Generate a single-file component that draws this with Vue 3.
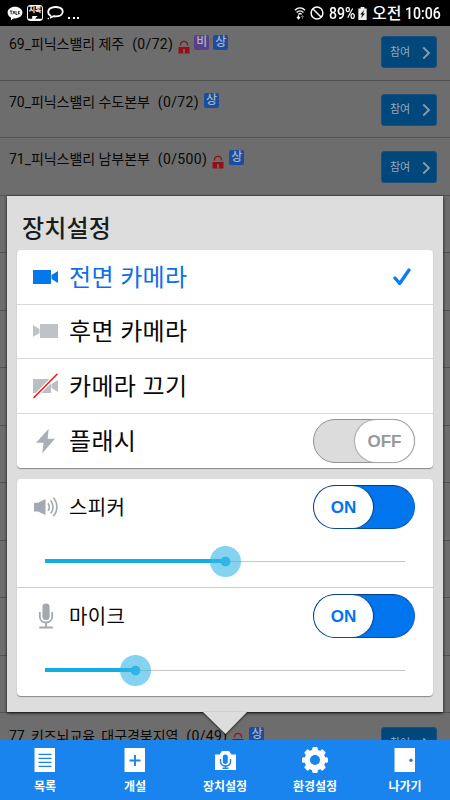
<script setup>
import { ref } from 'vue'

const rooms = [
  { title: '69_피닉스밸리 제주', count: '(0/72)', lock: true, tags: ['비', '상'] },
  { title: '70_피닉스밸리 수도본부', count: '(0/72)', lock: false, tags: ['상'] },
  { title: '71_피닉스밸리 남부본부', count: '(0/500)', lock: true, tags: ['상'] },
  ...Array.from({ length: 9 }, () => ({ title: '' })),
  { title: '77_키즈뇌교육_대구경북지역', count: '(0/49)', lock: true, tags: ['상'] },
]
const cameras = [
  { id: 'front', label: '전면 카메라' },
  { id: 'back', label: '후면 카메라' },
  { id: 'off', label: '카메라 끄기' },
]
const camera = ref('front')
const flash = ref(false)
const channels = ref([
  { id: 'speaker', label: '스피커', on: true, level: 50 },
  { id: 'mic', label: '마이크', on: true, level: 25 },
])
const tabs = [
  { id: 'list', label: '목록' },
  { id: 'add', label: '개설' },
  { id: 'device', label: '장치설정' },
  { id: 'gear', label: '환경설정' },
  { id: 'exit', label: '나가기' },
]
</script>

<template>
  <div class="screen">
    <header class="status">
      <svg class="talk" viewBox="0 0 16 15"><path d="M8 .8c4.200 0 7.400 2.500 7.400 5.800S12.200 12.400 8 12.400H6.600L3.800 14.600l.3-2.900C1.900 10.600.6 8.800.6 6.600.6 3.300 3.800.8 8 .8z" fill="#fff" /><path d="M2.800 5h2.800M4.200 5v3.400M5.800 8.400 7 5l1.200 3.400M9 5v3.400h1.600M11.500 5v3.400M13.200 5l-1.700 1.700 1.700 1.700" fill="none" stroke="#111" stroke-width=".8" /></svg>
      <span class="jitok"><span>지톡</span></span>
      <svg class="bubble" viewBox="0 0 17 14"><path d="M4.200 9.800C.3 8.600.2 3.300 4.200 1.800c2.500-.9 6.500-.9 9 0 3.300 1.400 3.300 6.100.2 7.700-2 .8-4.400.9-6.200.7-1.600.1-2.600 1.200-4.200 1.600" fill="none" stroke="#fff" stroke-width="1.800" /><circle cx="1.300" cy="12.600" r=".8" fill="#fff" /></svg>
      <span class="dots"><i></i><i></i><i></i></span>
      <span class="grow"></span>
      <svg class="wifi" viewBox="0 0 12 14"><g fill="none" stroke="#fff"><path d="M1 4.200c3-3 7-3 10 0" stroke-width="1.500" /><path d="M2.600 6.400c2-2 4.800-2 6.800 0" stroke-width="1.400" /><path d="M4.300 8.400c1-1 2.400-1 3.400 0" stroke-width="1.300" /><path d="M4.500 9.300v3M3 11l1.500 1.800L6 11" stroke-width="1.200" /><path d="M8.500 13V9.500M7 11l1.500-1.500L10 11" stroke="#666" /></g></svg>
      <svg class="block" viewBox="0 0 14 14"><circle cx="7" cy="7" r="5.900" /><path d="m3 3 8 8" /></svg>
      <span class="pct"><span>89%</span></span>
      <svg class="battery" viewBox="0 0 9 14"><path d="M2.500 0h4v1.500H9V14H0V1.500h2.500z" fill="#eee" /><path d="M6.500 3 2 8h2.200L2.800 12 7.300 7H5z" fill="#111" /></svg>
      <span class="ampm">오전</span>
      <span class="clock"><span>10:06</span></span>
    </header>

    <main class="rooms">
      <div v-for="(room, i) in rooms" :key="i" class="room">
        <template v-if="room.title">
          <span class="title">{{ room.title }}</span>
          <span class="count">{{ room.count }}</span>
          <svg v-if="room.lock" class="lock" viewBox="0 0 12 14"><path d="M2.500 5.500V4.800a3.500 3.500 0 0 1 7 0v.7" fill="none" stroke="#970e18" stroke-width="1.300" /><path d="M.5 7h11v6.500H.5z" fill="#970e18" /><path d="M5.200 9h1.700v4.500H5.200z" fill="#6d6d6d" /></svg>
          <span v-for="tag in room.tags" :key="tag" class="tag" :class="{ violet: tag === '비' }">{{ tag }}</span>
          <button class="join">참여<svg viewBox="0 0 9 14"><path d="m1.300 1.500 5.700 5.500-5.700 5.500" /></svg></button>
        </template>
      </div>
    </main>

    <section class="panel">
      <h1>장치설정</h1>
      <div class="card">
        <div v-for="c in cameras" :key="c.id" class="row" :class="{ active: camera === c.id }" @click="camera = c.id">
          <svg class="icon" viewBox="0 0 26 26">
            <path v-if="c.id === 'front'" d="M0 6h18v14H0zM25 7v12l-6.500-4v-4z" fill="#0577ed" />
            <path v-if="c.id === 'back'" d="M7 6h18v14H7zM0 7v12l6.500-4v-4z" fill="#bfc2c7" />
            <g v-if="c.id === 'off'"><path d="M0 6h18v14H0zM25 7v12l-6.500-4v-4z" fill="#b9bfc5" /><path d="M.5 25 24.500.8" stroke="#fff" stroke-width="4" /><path d="M.5 25 24.500.8" stroke="#ff1a1a" stroke-width="1.600" /></g>
          </svg>
          <span class="label">{{ c.label }}</span>
          <svg v-if="camera === c.id" class="check" viewBox="0 0 18 18"><path d="m2 10 4.700 5.500L16 2" fill="none" stroke="#0a7aff" stroke-width="3.300" stroke-linecap="round" stroke-linejoin="round" /></svg>
        </div>
        <div class="row">
          <svg class="icon" viewBox="0 0 26 26"><path d="M15.700.8 3 14.700h7.600L9.300 25.200 22 10.800h-7.300z" fill="#a9afb6" /></svg>
          <span class="label">플래시</span>
          <button class="switch" :class="{ on: flash }" @click="flash = !flash"><span>{{ flash ? 'ON' : 'OFF' }}</span></button>
        </div>
      </div>
      <div class="card">
        <div v-for="ch in channels" :key="ch.id" class="channel">
          <div class="row small">
            <svg class="icon" viewBox="0 0 26 26">
              <g v-if="ch.id === 'speaker'"><path d="M1 8.800h4L12.500 5v16L5 17.500H1z" fill="#a3a9b1" /><path d="M15 9.200c1.500 2.200 1.500 5.500 0 7.700M17.700 6.500c3 3.800 3 9.200 0 13M20.300 3.800c4.800 5.200 4.800 13.200 0 18.400" fill="none" stroke="#a3a9b1" stroke-width="1.600" /></g>
              <g v-else fill="none" stroke="#a3a9b1"><rect x="9.400" y=".5" width="7.200" height="16.500" rx="3.500" fill="#a3a9b1" stroke="none" /><path d="M6.800 9v4.500c0 3.700 2.500 6 6.200 6s6.200-2.300 6.200-6V9" stroke-width="1.800" /><path d="M13 19.500v5M6.300 24.500h13.500" stroke-width="1.800" /></g>
            </svg>
            <span class="label">{{ ch.label }}</span>
            <button class="switch" :class="{ on: ch.on }" @click="ch.on = !ch.on"><span>{{ ch.on ? 'ON' : 'OFF' }}</span></button>
          </div>
          <div class="slider">
            <div class="fill" :style="{ width: ch.level + '%' }"></div>
            <div class="thumb"></div>
            <div class="rest"></div>
          </div>
        </div>
      </div>
      <svg class="pointer" viewBox="0 0 44 24"><path d="M0 0h44L22.500 22z" fill="#ddd" /></svg>
    </section>

    <nav class="tabs">
      <div v-for="t in tabs" :key="t.id" class="tab">
        <svg viewBox="0 0 28 28">
          <g v-if="t.id === 'list'"><path d="M3.500 2h20.500v24H3.500z" fill="#fff" /><path d="M7.500 8.300h13M7.500 12.300h13M7.500 16.300h13M7.500 20.300h13" stroke="#1983ee" stroke-width="1.200" /></g>
          <g v-if="t.id === 'add'"><path d="M3.500 2h20.500v24H3.500z" fill="#fff" /><path d="M14 9v11M8.500 14.500h11" stroke="#1983ee" stroke-width="1.900" /></g>
          <g v-if="t.id === 'device'"><path d="M4 8.500h4.500L11 5h7l2.500 3.500H25V24H4z" fill="#fff" /><rect x="11.800" y="8.500" width="5" height="9.500" rx="2.500" fill="#1983ee" /><path d="M9.500 13v2c0 3.200 2 5 5 5s5-1.800 5-5v-2M14.500 20v2.500M11.500 22.300h6" fill="none" stroke="#1983ee" stroke-width="1.400" /></g>
          <g v-if="t.id === 'gear'"><g fill="#fff"><circle cx="14" cy="14" r="10.500" /><rect v-for="a in 8" :key="a" x="11.200" y="1" width="5.600" height="6" rx="1.500" :transform="`rotate(${a * 45} 14 14)`" /></g><circle cx="14" cy="14" r="5" fill="#1983ee" /></g>
          <g v-if="t.id === 'exit'"><path d="M3.500 2h20.500v24H3.500z" fill="#fff" /><circle cx="20" cy="14.300" r="1.700" fill="#1983ee" /></g>
        </svg>
        <span>{{ t.label }}</span>
      </div>
    </nav>
  </div>
</template>

<style>
body { margin: 0; background: #6d6d6d; }
</style>

<style scoped>
.screen { position: relative; width: 450px; height: 800px; overflow: hidden; display: flex; flex-direction: column; background: #6d6d6d; font-family: Roboto, "Noto Sans CJK KR", sans-serif; }
button { border: 0; padding: 0; font: inherit; }
.status { height: 26px; flex: none; display: flex; align-items: center; box-sizing: border-box; padding: 0 9px 0 7px; background: #000; color: #fff; white-space: nowrap; }
.status > * { flex: none; }
.status .grow { flex: 1; }
.talk { width: 16px; height: 15px; }
.jitok { position: relative; box-sizing: border-box; width: 16px; height: 16px; margin-left: 4px; border: 1.500px solid #fff; border-radius: 3px; display: flex; justify-content: center; font-size: 7px; line-height: 9px; font-weight: 700; letter-spacing: -.3px; }
.jitok::after { content: ""; position: absolute; left: 0; right: 0; bottom: 0; height: 4px; background: #fff; clip-path: polygon(0 70%, 30% 70%, 30% 0, 70% 0, 50% 60%, 60% 70%, 100% 70%, 100% 100%, 0 100%); }
.bubble { width: 17px; height: 14px; margin-left: 4px; }
.dots { display: flex; gap: 2.500px; margin: 9px 0 0 4px; }
.dots i { width: 2px; height: 2px; background: #fff; }
.wifi { width: 12px; height: 14px; }
.block { width: 14px; height: 14px; margin-left: 4px; fill: none; stroke: #fff; stroke-width: 1.500; }
.pct { width: 26px; margin-left: 5px; font-size: 17px; font-weight: 500; line-height: 26px; }
.clock { width: 36px; margin-left: 4px; font-size: 17px; font-weight: 500; line-height: 26px; }
.pct span, .clock span { display: inline-block; transform: scaleX(.83); transform-origin: left; }
.battery { width: 9px; height: 13px; margin-left: 3px; }
.ampm { width: 29px; margin-left: 5px; font-size: 16px; line-height: 25px; font-weight: 500; }

.rooms { flex: 1; overflow: hidden; display: grid; grid-template-rows: 54.500px; grid-auto-rows: 57.500px; }
.room { display: flex; align-items: flex-start; box-sizing: border-box; border-bottom: 1px solid #525252; padding: 12px 13px 0 9px; font-size: 14px; line-height: 18px; color: #080808; }
.room:first-child { padding-top: 9px; }
.room:last-child { padding-top: 14px; }
.title { white-space: pre; letter-spacing: -.05px; }
.count { margin-left: 8px; letter-spacing: .35px; }
.lock { width: 12px; height: 14px; margin: 5px 0 0 5px; }
.tag { width: 15px; height: 15px; margin: 0 0 0 5px; border-radius: 2px; background: #1a4d9c; color: #a8b4c8; text-align: center; font-size: 12px; line-height: 14px; font-weight: 500; }
.tag.violet { background: #584087; margin-left: 4px; }
.tag.violet + .tag { margin-left: 4px; }
.join { display: flex; align-items: center; justify-content: space-between; box-sizing: border-box; width: 56px; height: 32px; margin: 1px 0 0 auto; padding: 1px 5px 0 8px; border-radius: 3px; background: #00477c; color: #9aa9b4; font-size: 11px; border: 1px solid #1f4f7c; }
.room:last-child .join { margin-top: 0; }
.join svg { width: 9px; height: 14px; fill: none; stroke: #929ba3; stroke-width: 1.800; }

.panel { position: absolute; left: 7px; top: 196px; width: 436px; height: 516px; box-sizing: border-box; padding: 16px 10px 0; background: #ddd; box-shadow: 0 1px 3px rgba(0, 0, 0, .85); }
h1 { margin: 0 0 5px 5px; padding-top: 1px; font-size: 24px; line-height: 32px; font-weight: 500; color: #1c1c1c; letter-spacing: .15px; }
.card { margin-bottom: 11px; background: #fff; border-radius: 4px; box-shadow: 0 1px 1px #888; overflow: hidden; }
.row { display: flex; align-items: center; box-sizing: border-box; height: 54.500px; padding: 0 18px 0 16px; border-bottom: 1px solid #d8d8d8; color: #080808; font-size: 24px; }
.row:last-child { border-bottom: 0; }
.icon { width: 26px; height: 26px; flex: none; }
.label { flex: 1; margin-left: 10px; padding-top: 2px; line-height: 32px; letter-spacing: .35px; }
.active { color: #0b6df0; }
.check { width: 18px; height: 18px; margin-right: 4px; }
.switch { width: 102px; height: 44px; box-sizing: border-box; display: flex; justify-content: flex-end; border-radius: 22px; border: 1px solid #929292; background: #dcdcdc; }
.switch span { box-sizing: border-box; width: 59px; height: 42px; border-radius: 21px; background: #fff; color: #999; font: 700 17px/43px "Liberation Sans", sans-serif; text-align: center; box-shadow: 0 0 1px 1px #aaa; }
.switch.on { justify-content: flex-start; background: #0075ed; border: 1px solid #0a3b86; border-right-color: #0868ce; border-bottom-color: #0b4ca2; }
.switch.on span { color: #0075ed; box-shadow: 1px 0 1px #034083; }
.channel { height: 109px; box-sizing: border-box; border-bottom: 1px solid #ccc; }
.channel:last-child { height: 108px; border-bottom: 0; }
.row.small { height: 55px; border: 0; font-size: 20px; }
.slider { display: flex; align-items: center; height: 54px; padding: 0 28px; }
.fill { height: 4px; flex: none; background: #12aee3; }
.thumb { flex: none; width: 31px; height: 31px; margin: 0 -15.500px; border-radius: 50%; background: radial-gradient(circle, #31b5e6 0 4.500px, rgba(51, 181, 229, .6) 5.200px); z-index: 1; }
.rest { flex: 1; height: 1px; background: #c5c5c5; }
.pointer { position: absolute; left: 196px; top: 515.500px; width: 44px; height: 24px; filter: drop-shadow(0 1px 1px rgba(0, 0, 0, .7)); }

.tabs { position: relative; flex: none; height: 60px; display: grid; grid-template-columns: repeat(5, 1fr); background: #1983ee; color: #fff; }
.tab { display: flex; flex-direction: column; align-items: center; padding-top: 6px; font-size: 12px; line-height: 18px; font-weight: 700; }
.tab svg { width: 28px; height: 28px; margin-bottom: 4px; }
</style>
